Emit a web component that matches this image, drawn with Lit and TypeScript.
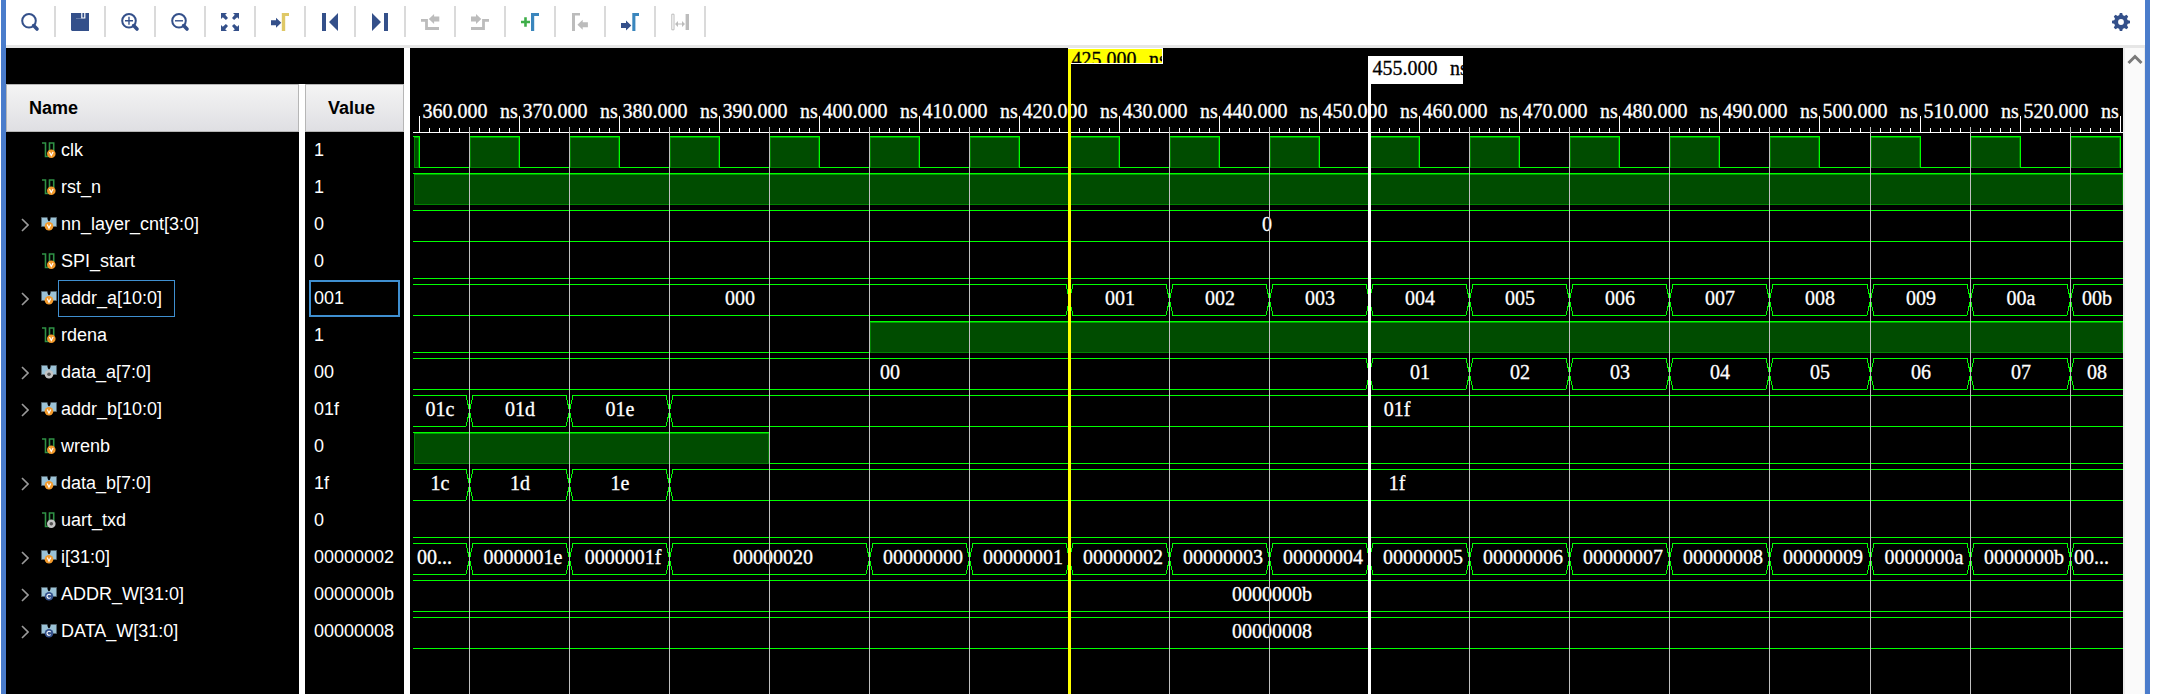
import { LitElement, html, svg, css, nothing, TemplateResult } from "lit";
import { customElement, state } from "lit/decorators.js";

type Badge = "variable" | "output" | "constant";
type Segment = { from: number; text: string };

interface Signal {
  name: string;
  value: string;
  badge: Badge;
  bus?: Segment[];
  /** Times at which a one-bit signal is high. */
  high?: Array<[number, number]>;
  selected?: boolean;
}

const START = -Infinity;
const END = Infinity;

/** Consecutive hex values, one every 10 ns. */
function counter(from: number, first: number, count: number, digits: number): Segment[] {
  return Array.from({ length: count }, (_, n) => ({
    from: from + n * 10,
    text: (first + n).toString(16).padStart(digits, "0"),
  }));
}

const clockPulses: Array<[number, number]> = Array.from({ length: 60 }, (_, n) => [
  355 + n * 10,
  360 + n * 10,
]);

const signals: Signal[] = [
  { name: "clk", value: "1", badge: "variable", high: clockPulses },
  { name: "rst_n", value: "1", badge: "variable", high: [[START, END]] },
  { name: "nn_layer_cnt[3:0]", value: "0", badge: "variable", bus: [{ from: START, text: "0" }] },
  { name: "SPI_start", value: "0", badge: "variable", high: [] },
  {
    name: "addr_a[10:0]", value: "001", badge: "variable", selected: true,
    bus: [{ from: START, text: "000" }, ...counter(425, 1, 11, 3)],
  },
  { name: "rdena", value: "1", badge: "variable", high: [[405, END]] },
  {
    name: "data_a[7:0]", value: "00", badge: "output",
    bus: [{ from: START, text: "00" }, ...counter(455, 1, 8, 2)],
  },
  {
    name: "addr_b[10:0]", value: "01f", badge: "variable",
    bus: [{ from: START, text: "01c" }, ...counter(365, 0x1d, 3, 3)],
  },
  { name: "wrenb", value: "0", badge: "variable", high: [[START, 395]] },
  {
    name: "data_b[7:0]", value: "1f", badge: "variable",
    bus: [{ from: START, text: "1c" }, ...counter(365, 0x1d, 3, 2)],
  },
  { name: "uart_txd", value: "0", badge: "output", high: [] },
  {
    name: "i[31:0]", value: "00000002", badge: "variable",
    bus: [{ from: START, text: "0000001d" }, ...counter(365, 0x1e, 3, 8), ...counter(405, 0, 13, 8)],
  },
  { name: "ADDR_W[31:0]", value: "0000000b", badge: "constant", bus: [{ from: START, text: "0000000b" }] },
  { name: "DATA_W[31:0]", value: "00000008", badge: "constant", bus: [{ from: START, text: "00000008" }] },
];

const arrowRight = (y: number) => svg`<path d="M0 ${y - 2.5}H5V${y - 5}L10.3 ${y}L5 ${y + 5}V${y + 2.5}H0Z"/>`;
const arrowLeft = (x: number, y: number) =>
  svg`<path d="M${x} ${y}L${x + 5.3} ${y - 5}V${y - 2.5}H${x + 10.5}V${y + 2.5}H${x + 5.3}V${y + 5}Z"/>`;

const magnifier = svg`
  <circle cx="8" cy="7.8" r="6.8" fill="none" stroke="currentColor" stroke-width="2"/>
  <path d="M12.6 12.6L16 16" stroke="currentColor" stroke-width="3.6" stroke-linecap="round"/>`;

interface Tool { label: string; icon: TemplateResult | unknown; disabled?: boolean }

const tools: Tool[] = [
  { label: "Search", icon: magnifier },
  {
    label: "Save waveform configuration",
    icon: svg`<path d="M0 0H5V5.6H14.4V0H18V18H1L0 17Z"/><path d="M5 0H10.2V5.6H5ZM11.4 0H13.2V4.4H11.4Z"/>`,
  },
  { label: "Zoom in", icon: svg`${magnifier}<path d="M4 7.1H12V8.5H4ZM7.3 3.8H8.7V11.8H7.3Z"/>` },
  { label: "Zoom out", icon: svg`${magnifier}<path d="M4 7.1H12V8.5H4Z"/>` },
  {
    label: "Zoom fit",
    icon: svg`<path d="M0 0H6L4.2 1.8L7 4.9L4.9 7L1.8 4.2L0 6ZM18 0V6L16.2 4.2L13.1 7L11 4.9L13.8 1.8L12 0ZM0 18V12L1.8 13.8L4.9 11L7 13.1L4.2 16.2L6 18ZM18 18H12L13.8 16.2L11 13.1L13.1 11L16.2 13.8L18 12Z"/>`,
  },
  { label: "Go to cursor", icon: svg`${arrowRight(9.7)}<path fill="#dfc866" d="M10.8 0H18V3H14.2V18H10.8Z"/>` },
  { label: "Go to time 0", icon: svg`<path d="M1 0H5V18H1ZM17 0V18L8 9Z"/>` },
  { label: "Go to last time", icon: svg`<path d="M1 0L10 9L1 18ZM13 0H17V18H13Z"/>` },
  {
    label: "Previous transition", disabled: true,
    icon: svg`<path d="M0 7.3H5.5V15.5H18" fill="none" stroke="currentColor" stroke-width="2.8"/>${arrowLeft(7.8, 6)}`,
  },
  {
    label: "Next transition", disabled: true,
    icon: svg`<path d="M0 15.5H12.5V7.3H18" fill="none" stroke="currentColor" stroke-width="2.8"/>${arrowRight(6)}`,
  },
  {
    label: "Add marker",
    icon: svg`<path fill="#3fae49" d="M0 7.7H3.2V4.3H5.8V7.7H9V10.3H5.8V13.7H3.2V10.3H0Z"/><path fill="#3a86bd" d="M10 0H18V3H13.2V18H10Z"/>`,
  },
  { label: "Previous marker", disabled: true, icon: svg`<path d="M1 0H9V2.6H4V18H1Z"/>${arrowLeft(6.4, 11.7)}` },
  { label: "Next marker", icon: svg`${arrowRight(12.4)}<path fill="#3a86bd" d="M11.3 0H18V3H14.4V18H11.3Z"/>` },
  {
    label: "Swap cursors", disabled: true,
    icon: svg`<path d="M.8 1.2H3V16.8H.8Z" fill="none" stroke="currentColor" stroke-width="1"/>
      <path d="M14.6 1H18V17H14.6ZM4 11L7 8V10.4H11V8L14 11L11 14V11.6H7V14Z"/>`,
  },
];

function badgeIcon(badge: Badge, cx: number, cy: number) {
  const fill = { variable: "#f39a2b", output: "#c4c4c4", constant: "#35528c" }[badge];
  const mark =
    badge === "variable"
      ? svg`<path d="M${cx - 1.8} ${cy - 1.8}L${cx} ${cy + 1.8}L${cx + 1.8} ${cy - 1.8}" fill="none" stroke="#fff" stroke-width="1.2"/>`
      : badge === "output"
        ? svg`<circle cx=${cx} cy=${cy} r="1.8" fill="#555"/>`
        : svg`<path d="M${cx + 1.6} ${cy - 1.2}A2 2 0 1 0 ${cx + 1.6} ${cy + 1.2}" fill="none" stroke="#fff" stroke-width="1.1"/>`;
  return svg`<circle cx=${cx} cy=${cy} r="4.3" fill=${fill}/>${mark}`;
}

function signalIcon(signal: Signal) {
  return html`<svg class="kind" viewBox="0 0 16 17" aria-hidden="true">
    ${signal.bus
      ? svg`<path d="M.5 1.5H6.2L8 5L9.8 1.5H15.5V10.5H.5Z" fill="#9bc2d6" stroke="#55666f"/>
          <path d="M6.8 1H9.2V4L8 5.5L6.8 4Z" fill="#000"/>${badgeIcon(signal.badge, 8, 10.3)}`
      : svg`<path d="M1 1H4.5V14.5H8.5V1H12.7V9" fill="none" stroke="#2f9145" stroke-width="1.6"/>${badgeIcon(signal.badge, 10.3, 11.7)}`}
  </svg>`;
}

@customElement("wave-canvas")
class WaveCanvas extends LitElement {
  @state() private width = 1713;
  private observer?: ResizeObserver;

  static styles = css`
    :host { display: flex; background: #000; overflow: hidden; }
    svg { flex: 1; width: 100%; min-height: 602px; display: block; }
    text { font: 20px/20px "Liberation Serif", "Times New Roman", serif; fill: #fff; stroke: #fff; stroke-width: 0.3px; }
    .value, .number { text-anchor: middle; }
    .lines { shape-rendering: crispEdges; }
    .trace { fill: none; stroke: #00ff00; }
    .area { fill: #004c00; stroke: #008000; }
    .shade { stroke: #00a000; }
    .grid { stroke: #c0c0c0; }
    .ruler { stroke: #fff; }
    .flag text { fill: #000; stroke: #000; }
  `;

  connectedCallback() {
    super.connectedCallback();
    this.observer = new ResizeObserver(([entry]) => {
      this.width = Math.round(entry.contentRect.width);
    });
    this.observer.observe(this);
  }

  disconnectedCallback() {
    super.disconnectedCallback();
    this.observer?.disconnect();
  }

  private x(time: number): number {
    if (time === START) return 3;
    if (time === END) return this.width;
    return Math.max(3, Math.min(this.width, Math.floor(9 + (time - 360) * 10.007)));
  }

  private bit(high: Array<[number, number]>, top: number) {
    const hi = top + 4.5;
    const lo = top + 35.5;
    let path = `M3 ${lo}`;
    const areas = [];
    for (const [from, to] of high) {
      const a = this.x(from);
      const b = this.x(to);
      if (a >= b) continue;
      path += a === 3 ? `M3 ${hi}` : `H${a + 0.5}V${hi}`;
      path += b === this.width ? `H${b}` : `H${b + 0.5}V${lo}`;
      areas.push(svg`<path class="area" d="M${a + 1.5} ${hi + 1}H${b - 0.5}V${lo}H${a + 1.5}Z"/>
        <path class="shade" d="M${a + 1} ${hi + 1}H${b}"/>`);
    }
    const last = high[high.length - 1];
    if (!last || this.x(last[1]) < this.width) path += `H${this.width}`;
    return svg`<path class="trace" d=${path}/>${areas}`;
  }

  private bus(segments: Segment[], top: number) {
    const hi = top + 4.5;
    const mid = top + 20;
    const lo = top + 35.5;
    return segments.map((segment, n) => {
      const a = this.x(segment.from);
      if (a >= this.width) return nothing;
      const b = this.x(segments[n + 1]?.from ?? END);
      const left = a === 3 ? a : a + 4;
      const right = b === this.width ? b : b - 3;
      const head = a === 3 ? "" : `M${left} ${hi}L${a + 0.5} ${mid}L${left} ${lo}`;
      const tail = b === this.width ? "" : `M${right} ${hi}L${b + 0.5} ${mid}L${right} ${lo}`;
      return svg`<path class="trace" d="M${left} ${hi}H${right}M${left} ${lo}H${right}${head}${tail}"/>`;
    });
  }

  private busText(segments: Segment[], top: number) {
    return segments.map((segment, n) => {
      const a = this.x(segment.from);
      if (a >= this.width) return nothing;
      const b = this.x(segments[n + 1]?.from ?? END);
      if (b - a < segment.text.length * 10) {
        return svg`<text x=${a + 4} y=${top + 25}>${segment.text.slice(0, 2)}...</text>`;
      }
      const shift = segment.text.length > 4 ? 4 : a === 3 ? -1 : 1;
      return svg`<text class="value" x=${Math.floor((a + b) / 2) + shift} y=${top + 25}>${segment.text}</text>`;
    });
  }

  private time(x: number, y: number, time: number) {
    return svg`<text class="number" x=${x + 36} y=${y}>${time}.000</text><text x=${x + 81} y=${y}>ns</text>`;
  }

  render() {
    const axis = 84;
    const ticks = [];
    const labels = [];
    const grid = [];
    for (let t = 360; this.x(t) < this.width; t++) {
      const x = this.x(t) + 0.5;
      const height = t % 10 === 0 ? 16 : t % 5 === 0 ? 5 : 4;
      ticks.push(`M${x} ${axis}V${axis - height}`);
      if (t % 10 === 0 && this.x(t + 10) < this.width) labels.push(this.time(this.x(t), 70, t));
      if (t % 10 === 5) grid.push(svg`<line x1=${x} x2=${x} y1=${axis - 5} y2="100%"/>`);
    }
    const cursor = this.x(425);
    const marker = this.x(455);
    return html`<svg role="img" aria-label="Signal waveforms">
      <defs>
        <clipPath id="cursor-flag"><rect x=${cursor} y="0" width="93" height="15"/></clipPath>
        <clipPath id="marker-flag"><rect x=${marker} y="8" width="94" height="28"/></clipPath>
      </defs>
      ${labels}
      <g class="lines">
        <path class="ruler" d="M3 ${axis + 0.5}H${this.width}${ticks.join("")}"/>
        ${signals.map((s, n) => (s.bus ? this.bus(s.bus, axis + n * 37) : this.bit(s.high ?? [], axis + n * 37)))}
      </g>
      ${signals.map((s, n) => (s.bus ? this.busText(s.bus, axis + n * 37) : nothing))}
      <g class="lines grid">${grid}</g>
      <g class="flag">
        <rect x=${cursor - 1} y="0" width="95" height="16" fill="#fff"/>
        <rect x=${cursor} y="1" width="93" height="14" fill="#ff0"/>
        <g clip-path="url(#cursor-flag)">${this.time(cursor - 1, 18, 425)}</g>
        <rect x=${cursor - 1} y="1" width="3" height="100%" fill="#ff0"/>
      </g>
      <g class="flag">
        <rect x=${marker - 1} y="8" width="95" height="28" fill="#fff"/>
        <g clip-path="url(#marker-flag)">${this.time(marker, 27, 455)}</g>
        <rect x=${marker - 1} y="8" width="3" height="100%" fill="#fff"/>
      </g>
    </svg>`;
  }
}

@customElement("app-root")
class AppRoot extends LitElement {
  static styles = css`
    :host {
      display: flex;
      box-sizing: border-box;
      min-height: 100vh;
      padding: 0 13px 0 1px;
      background: #fff;
      color: #fff;
      font: 18px/37px "Liberation Sans", Arial, sans-serif;
    }
    .frame {
      flex: 1;
      min-width: 0;
      display: flex;
      flex-direction: column;
      border: 0 solid #4a7ccb;
      border-width: 0 5px;
    }
    .toolbar {
      display: flex;
      padding: 6px 0 8px;
      border-bottom: 3px solid #e6e6e6;
    }
    .tool {
      display: grid;
      place-items: center;
      box-sizing: content-box;
      width: 48px;
      height: 31px;
      padding: 0;
      border: 0;
      border-right: 2px solid #dadada;
      background: none;
      color: #34508a;
    }
    .tool:disabled { color: #bcbcbc; }
    .tool svg { width: 18px; height: 18px; fill: currentColor; overflow: visible; }
    .settings { margin-left: auto; border: 0; }
    .body { flex: 1; display: flex; }
    .signals {
      display: flex;
      flex-direction: column;
      width: 398px;
      margin-right: 6px;
      padding-top: 36px;
      background: #000;
    }
    .list {
      flex: 1;
      background: linear-gradient(to right, #000 293px, #fff 293px, #fff 299px, #000 299px);
    }
    table { width: 100%; border-collapse: separate; border-spacing: 0; table-layout: fixed; }
    th, td { padding: 0; text-align: left; font-weight: normal; }
    .name-column { width: 293px; }
    .value-column { padding-left: 6px; }
    .heading {
      box-sizing: border-box;
      height: 48px;
      padding: 0 22px;
      border: 1px solid #b6b6b6;
      background: linear-gradient(#f4f4f4, #dfdfe3);
      color: #000;
      font-weight: bold;
      line-height: 46px;
    }
    .name { display: flex; align-items: center; height: 37px; padding-left: 14px; }
    .expand {
      display: grid;
      place-items: center;
      width: 10px;
      height: 17px;
      padding: 0;
      margin-right: 11px;
      border: 0;
      background: none;
    }
    .expand svg { width: 8px; height: 14px; }
    .leaf { width: 21px; }
    .kind { width: 16px; height: 17px; margin-right: 1px; }
    .text { box-sizing: border-box; height: 37px; padding-left: 2px; border: 1px solid transparent; line-height: 35px; }
    .value {
      box-sizing: border-box;
      height: 37px;
      margin: 0 4px;
      padding-left: 3px;
      border: 2px solid transparent;
      line-height: 33px;
    }
    .selected .text { padding-right: 12px; border-color: #3f8fd0; }
    .selected .value { border-color: #3f8fd0; }
    wave-canvas { flex: 1; min-width: 0; }
    .scroll {
      box-sizing: border-box;
      width: 22px;
      padding-top: 4px;
      border: 0 solid #ececec;
      border-width: 0 1px 0 2px;
      background: #fafafa;
    }
    .scroll-up { display: block; width: 100%; height: 14px; padding: 0; border: 0; background: none; }
    .scroll-up svg { display: block; width: 16px; height: 12px; margin: 0 0 0 2px; }
  `;

  private row(signal: Signal) {
    return html`<tr class=${signal.selected ? "selected" : ""}>
      <th scope="row">
        <div class="name">
          ${signal.bus
            ? html`<button class="expand" aria-label="Expand ${signal.name}">
                <svg viewBox="0 0 8 14"><path d="M1 1L7 7L1 13" fill="none" stroke="#9a9a9a" stroke-width="1.6"/></svg>
              </button>`
            : html`<span class="leaf"></span>`}
          ${signalIcon(signal)}<span class="text">${signal.name}</span>
        </div>
      </th>
      <td class="value-column"><div class="value">${signal.value}</div></td>
    </tr>`;
  }

  render() {
    return html`<div class="frame">
      <div class="toolbar" role="toolbar" aria-label="Waveform">
        ${tools.map(
          (tool) => html`<button class="tool" aria-label=${tool.label} ?disabled=${tool.disabled}>
            <svg viewBox="0 0 18 18" aria-hidden="true">${tool.icon}</svg>
          </button>`
        )}
        <button class="tool settings" aria-label="Settings">
          <svg viewBox="0 0 18 18" aria-hidden="true">
            <circle cx="9" cy="9" r="4.9" fill="none" stroke="currentColor" stroke-width="4"/>
            ${[0, 45, 90, 135, 180, 225, 270, 315].map(
              (angle) => svg`<path d="M7 3L7.8 0H10.2L11 3Z" transform="rotate(${angle} 9 9)"/>`
            )}
          </svg>
        </button>
      </div>
      <div class="body">
        <div class="signals">
          <div class="list">
            <table>
              <thead>
                <tr>
                  <th class="name-column" scope="col"><div class="heading">Name</div></th>
                  <th class="value-column" scope="col"><div class="heading">Value</div></th>
                </tr>
              </thead>
              <tbody>
                ${signals.map((signal) => this.row(signal))}
              </tbody>
            </table>
          </div>
        </div>
        <wave-canvas></wave-canvas>
        <div class="scroll">
          <button class="scroll-up" aria-label="Scroll up">
            <svg viewBox="0 0 16 12"><path d="M1.5 10L8 3.5L14.5 10" fill="none" stroke="#7a7a7a" stroke-width="3"/></svg>
          </button>
        </div>
      </div>
    </div>`;
  }
}
